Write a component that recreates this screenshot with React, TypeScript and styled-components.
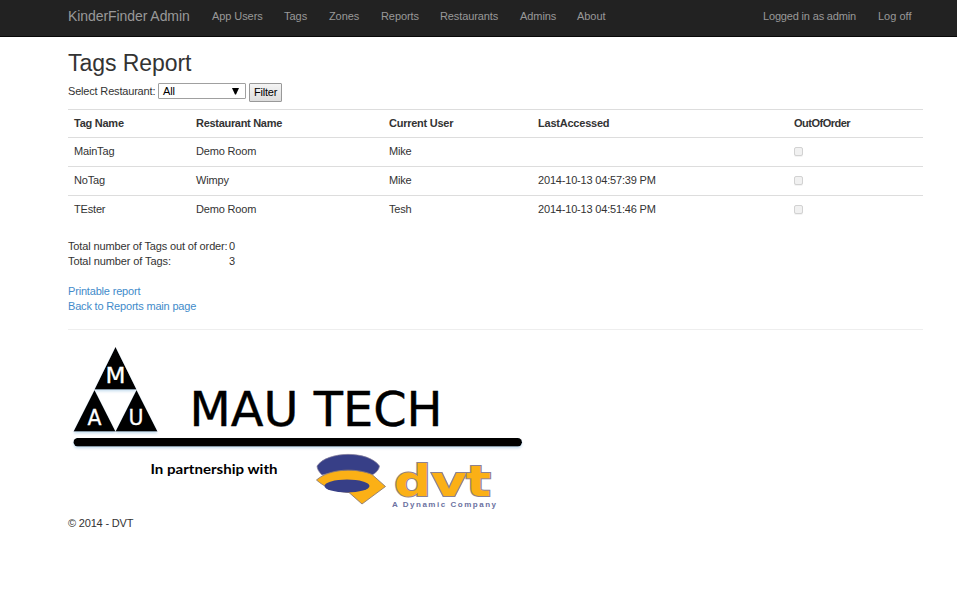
import React from "react";
import styled, { createGlobalStyle } from "styled-components";

const GlobalStyle = createGlobalStyle`
  * { box-sizing: border-box; }
  body {
    margin: 0;
    background: #fff;
    color: #333;
    font: 11px/15px "Liberation Sans", Arial, sans-serif;
    letter-spacing: -0.18px;
  }
`;

const Navbar = styled.nav`
  height: 37px;
  background: #222;
  border-bottom: 1px solid #080808;
  padding: 0 45px 0 68px;
  display: flex;
  align-items: flex-start;
  color: #999;
`;

const Brand = styled.a`
  width: 144px;
  font-size: 14px;
  line-height: 16px;
  padding-top: 8px;
  white-space: nowrap;
  letter-spacing: -0.07px;
`;

const NavItem = styled.a<{ $width: number; $spacing?: number }>`
  width: ${(p) => p.$width}px;
  letter-spacing: ${(p) => p.$spacing ?? 0}px;
  line-height: 15px;
  padding-top: 9px;
  white-space: nowrap;
`;

const NavRight = styled.div`
  margin-left: auto;
  display: flex;
`;

const Container = styled.main`
  width: 855px;
  margin-left: 68px;
`;

const Title = styled.h2`
  margin: 0;
  padding-top: 13px;
  height: 46px;
  font-size: 23px;
  line-height: 26px;
  font-weight: 400;
  letter-spacing: -0.05px;
`;

const FilterForm = styled.div`
  height: 26px;
  display: flex;
  align-items: flex-start;
`;

const FilterLabel = styled.label`
  width: 90px;
  padding-top: 1px;
  white-space: nowrap;
`;

const SelectBox = styled.div`
  width: 88px;
  height: 16px;
  border: 1px solid #a0a0a0;
  border-radius: 1px;
  color: #000;
  display: flex;
  justify-content: space-between;
  align-items: flex-start;
  padding: 0 6px 0 4px;
  line-height: 15px;
  svg { margin-top: 4px; }
`;

const FilterButton = styled.button`
  width: 33px;
  height: 19px;
  margin-left: 3px;
  padding: 0;
  border: 1px solid #999;
  border-radius: 1px;
  background: linear-gradient(#f4f4f4, #ddd);
  color: #000;
  font: 11px/17px "Liberation Sans", Arial, sans-serif;
  letter-spacing: -0.2px;
`;

const Table = styled.table`
  width: 855px;
  table-layout: fixed;
  border-collapse: separate;
  border-spacing: 0;
`;

const HeadCell = styled.th<{ $spacing: number }>`
  height: 28px;
  border-top: 1px solid #ddd;
  padding: 0 6px;
  text-align: left;
  vertical-align: middle;
  letter-spacing: ${(p) => p.$spacing}px;
`;

const Cell = styled.td`
  height: 29px;
  border-top: 1px solid #ddd;
  padding: 0 6px 1px;
  vertical-align: middle;
`;

const Checkbox = styled.span`
  display: block;
  width: 9px;
  height: 9px;
  border: 1px solid #d2d2d2;
  border-radius: 2px;
  background: #f1f1f1;
  box-shadow: 0 1px 0 #f3f3f3;
`;

const Totals = styled.dl`
  margin: 15px 0 0;
  display: grid;
  grid-template-columns: 161px auto;
  line-height: 15px;
`;

const Term = styled.dt<{ $spacing?: number }>`
  white-space: nowrap;
  letter-spacing: ${(p) => p.$spacing ?? -0.1}px;
`;

const Value = styled.dd`
  margin: 0;
`;

const Links = styled.div`
  margin-top: 15px;
  display: flex;
  flex-direction: column;
  align-items: flex-start;
  color: #428bca;
`;

const Rule = styled.hr`
  margin: 15px 0 0;
  border: 0;
  border-top: 1px solid #eee;
`;

const Logo = styled.svg`
  display: block;
  margin-top: 10px;
  letter-spacing: 0;
`;

const Copyright = styled.p`
  margin: 0;
  padding-top: 1px;
`;

const navItems = [
  { label: "App Users", width: 72, spacing: -0.15 },
  { label: "Tags", width: 45, spacing: 0 },
  { label: "Zones", width: 52, spacing: -0.2 },
  { label: "Reports", width: 59, spacing: -0.15 },
  { label: "Restaurants", width: 80, spacing: -0.2 },
  { label: "Admins", width: 57, spacing: -0.15 },
  { label: "About", width: 40, spacing: -0.1 },
];

const columns = [
  { label: "Tag Name", width: 122, spacing: -0.25 },
  { label: "Restaurant Name", width: 193, spacing: -0.3 },
  { label: "Current User", width: 149, spacing: -0.25 },
  { label: "LastAccessed", width: 256, spacing: -0.22 },
  { label: "OutOfOrder", width: 135, spacing: -0.5 },
];

const tags = [
  ["MainTag", "Demo Room", "Mike", ""],
  ["NoTag", "Wimpy", "Mike", "2014-10-13 04:57:39 PM"],
  ["TEster", "Demo Room", "Tesh", "2014-10-13 04:51:46 PM"],
];

function PartnerLogo() {
  return (
    <Logo width="460" height="175" viewBox="68 340 460 175">
      <defs>
        <filter id="glow" x="-5%" y="-5%" width="110%" height="130%">
          <feDropShadow dx="0" dy="2" stdDeviation="1.2" floodColor="#9cc4e4" floodOpacity="0.5" />
        </filter>
        <filter id="barGlow" filterUnits="userSpaceOnUse" x="68" y="430" width="460" height="25">
          <feDropShadow dx="0" dy="2" stdDeviation="1.2" floodColor="#9cc4e4" floodOpacity="0.5" />
        </filter>
      </defs>
      <g filter="url(#glow)">
        <path d="M115.5 347 L136.5 389.500 H94.500Z M94.500 390 L115.500 431.500 H73.500Z M136.500 390 L157.500 431.500 H115.500Z" />
      </g>
      <g fill="#fff" fontFamily="DejaVu Sans" fontSize="21" stroke="#fff" strokeWidth=".3">
        <text x="105.500" y="382.500" textLength="20" lengthAdjust="spacingAndGlyphs">M</text>
        <text x="87.500" y="424.500" textLength="14" lengthAdjust="spacingAndGlyphs">A</text>
        <text x="128.500" y="424.500" textLength="15" lengthAdjust="spacingAndGlyphs">U</text>
      </g>
      <text x="189.500" y="426" fontFamily="DejaVu Sans" fontSize="47.500" textLength="253" lengthAdjust="spacingAndGlyphs" stroke="#000" strokeWidth=".4">MAU TECH</text>
      <rect x="73.500" y="438" width="448.500" height="8.500" rx="4.200" filter="url(#barGlow)" />
      <text x="150.500" y="474" fontFamily="Lato" fontWeight="700" fontSize="13.500" textLength="127" lengthAdjust="spacingAndGlyphs">In partnership with</text>
      <path d="M317 466 C327 451 368 450 379.500 466 C379 470 376 473 372 475 C356 470 337 471 322 475 C319 472 317 469 317 466Z" fill="#373f87" stroke="#8a829c" strokeWidth=".7" />
      <path d="M316.500 480 C330 468 357 468 372 474.500 L385.500 486.500 L362 504 L349 492.500 C336 492 324 487 316.500 480Z" fill="#fbb016" stroke="#8c7b74" strokeWidth=".9" />
      <ellipse cx="347" cy="486" rx="22.500" ry="6.500" fill="#373f87" />
      <g fontFamily="DejaVu Sans" fontWeight="700" fontSize="42" fill="#fbb016" stroke="#8d8290" strokeWidth="2" paintOrder="stroke">
        <text x="394" y="496" textLength="37" lengthAdjust="spacingAndGlyphs">d</text>
        <text x="431" y="496" textLength="36" lengthAdjust="spacingAndGlyphs">v</text>
        <text x="466" y="496" textLength="25" lengthAdjust="spacingAndGlyphs">t</text>
      </g>
      <text x="392" y="507" fontFamily="Liberation Sans" fontWeight="700" fontSize="8" textLength="104" fill="#6c719f">A Dynamic Company</text>
    </Logo>
  );
}

export default function App() {
  return (
    <>
      <GlobalStyle />
      <Navbar>
        <Brand>KinderFinder Admin</Brand>
        {navItems.map((n) => (
          <NavItem key={n.label} $width={n.width} $spacing={n.spacing * 0.5}>{n.label}</NavItem>
        ))}
        <NavRight>
          <NavItem $width={115} $spacing={-0.17}>Logged in as admin</NavItem>
          <NavItem $width={34}>Log off</NavItem>
        </NavRight>
      </Navbar>
      <Container>
        <Title>Tags Report</Title>
        <FilterForm>
          <FilterLabel>Select Restaurant:</FilterLabel>
          <SelectBox>
            All
            <svg width="7" height="7" viewBox="0 0 7 7"><path d="M0 0H7L4 6.500H3Z" /></svg>
          </SelectBox>
          <FilterButton>Filter</FilterButton>
        </FilterForm>
        <Table>
          <colgroup>
            {columns.map((c) => <col key={c.label} width={c.width} />)}
          </colgroup>
          <thead>
            <tr>{columns.map((c) => <HeadCell key={c.label} $spacing={c.spacing}>{c.label}</HeadCell>)}</tr>
          </thead>
          <tbody>
            {tags.map((row) => (
              <tr key={row[0]}>
                {row.map((v, i) => <Cell key={i}>{v}</Cell>)}
                <Cell><Checkbox /></Cell>
              </tr>
            ))}
          </tbody>
        </Table>
        <Totals>
          <Term $spacing={-0.14}>Total number of Tags out of order:</Term>
          <Value>0</Value>
          <Term>Total number of Tags:</Term>
          <Value>3</Value>
        </Totals>
        <Links>
          <a>Printable report</a>
          <a>Back to Reports main page</a>
        </Links>
        <Rule />
        <PartnerLogo />
        <Copyright>© 2014 - DVT</Copyright>
      </Container>
    </>
  );
}
